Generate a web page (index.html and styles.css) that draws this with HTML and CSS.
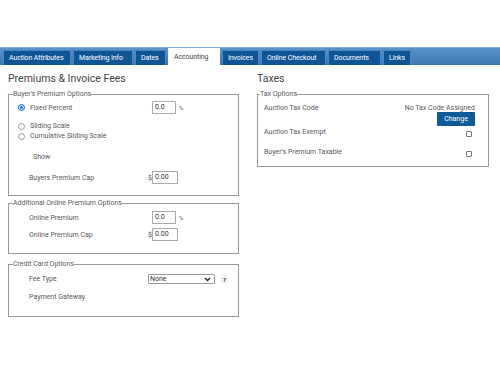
FILE: index.html
```html
<!DOCTYPE html>
<html lang="en">
<head>
    <meta charset="UTF-8">
    <meta name="viewport" content="width=device-width, initial-scale=1.0">
    <title>Accounting</title>
    <link rel="stylesheet" href="styles.css">
</head>
<body>

    <!-- Tab bar -->
    <div class="tabbar">
        <span class="tab">Auction Attributes</span>
        <span class="tab">Marketing Info</span>
        <span class="tab">Dates</span>
        <span class="tab active">Accounting</span>
        <span class="tab">Invoices</span>
        <span class="tab">Online Checkout</span>
        <span class="tab">Documents</span>
        <span class="tab">Links</span>
    </div>

    <div class="columns">
        <!-- Left column -->
        <div class="col">
            <h2>Premiums &amp; Invoice Fees</h2>

            <fieldset class="box box-premium">
                <legend>Buyer's Premium Options</legend>
                <div class="row">
                    <label class="radio"><span class="dot on"></span>Fixed Percent</label>
                    <span class="ctl"><span class="cur"></span><span class="field">0.0</span><span class="unit">%</span></span>
                </div>
                <div class="row tight first-radio">
                    <label class="radio"><span class="dot"></span>Sliding Scale</label>
                </div>
                <div class="row tight">
                    <label class="radio"><span class="dot"></span>Cumulative Sliding Scale</label>
                </div>
                <div class="row show">Show</div>
                <div class="row cap">
                    <span class="lbl">Buyers Premium Cap</span>
                    <span class="ctl"><span class="cur">$</span><span class="field wide">0.00</span></span>
                </div>
            </fieldset>

            <fieldset class="box box-online">
                <legend>Additional Online Premium Options</legend>
                <div class="row">
                    <span class="lbl">Online Premium</span>
                    <span class="ctl"><span class="cur"></span><span class="field">0.0</span><span class="unit">%</span></span>
                </div>
                <div class="row">
                    <span class="lbl">Online Premium Cap</span>
                    <span class="ctl"><span class="cur">$</span><span class="field wide">0.00</span></span>
                </div>
            </fieldset>

            <fieldset class="box box-card">
                <legend>Credit Card Options</legend>
                <div class="row">
                    <span class="lbl">Fee Type</span>
                    <span class="ctl">
                        <span class="select">None
                            <svg width="7" height="5" viewBox="0 0 7 5"><path d="M1 1l2.5 2.5L6 1" fill="none" stroke="#222" stroke-width="1.4"/></svg>
                        </span>
                        <span class="help">?</span>
                    </span>
                </div>
                <div class="row">
                    <span class="lbl">Payment Gateway</span>
                </div>
            </fieldset>
        </div>

        <!-- Right column -->
        <div class="col">
            <h2>Taxes</h2>

            <fieldset class="box box-tax">
                <legend>Tax Options</legend>
                <div class="tax-row code">
                    <span class="tlbl">Auction Tax Code</span>
                    <div class="tax-right">
                        <span>No Tax Code Assigned</span>
                        <button class="btn">Change</button>
                    </div>
                </div>
                <div class="tax-row exempt">
                    <span class="tlbl">Auction Tax Exempt</span>
                    <span class="check"></span>
                </div>
                <div class="tax-row taxable">
                    <span class="tlbl">Buyer's Premium Taxable</span>
                    <span class="check"></span>
                </div>
            </fieldset>
        </div>
    </div>

</body>
</html>
```

FILE: styles.css
```css
body {
    margin: 0;
    padding: 0;
    background-color: #fff;
    font-family: Roboto, "Liberation Sans", sans-serif;
    font-size: 7px;
    color: #5a5a5a;
}

/* Tab bar */
.tabbar {
    margin-top: 47px;
    height: 18px;
    display: flex;
    align-items: flex-end;
    gap: 2px;
    padding-left: 3px;
    background: linear-gradient(#5b93c9, #3d77b3);
    border-top: 1px solid #7aaad8;
    box-sizing: border-box;
}

.tab {
    height: 15px;
    padding: 0 5px;
    background-color: #0e5596;
    border: 1px solid #4c85bd;
    border-bottom: none;
    color: #fff;
    font-size: 7px;
    letter-spacing: -0.1px;
    box-sizing: border-box;
    display: flex;
    align-items: center;
}

.tab:first-child { width: 68px; }
.tab:nth-child(2) { width: 60px; }
.tab:nth-child(3) { width: 31px; }
.tab:nth-child(5) { width: 37px; }
.tab:nth-child(6) { width: 65px; }
.tab:nth-child(7) { width: 53px; }
.tab:nth-child(8) { width: 28px; }

.tab.active {
    width: 52px;
    height: 17px;
    background-color: #fff;
    color: #444;
    border-color: #fff;
}

/* Columns */
.columns {
    display: flex;
    gap: 18px;
    padding: 0 8px;
}

.col {
    display: flex;
    flex-direction: column;
}

.col:first-child { width: 231px; }
.col:last-child { width: 232px; }

h2 {
    margin: 7px 0 5px;
    font-size: 10.5px;
    font-weight: normal;
    color: #444;
    line-height: 13px;
}

.box {
    margin: 0;
    padding: 0 0 0 8px;
    border: 1px solid #9a9a9a;
    box-sizing: border-box;
}

.box legend {
    padding: 0;
    margin-left: -4px;
    font-size: 7px;
    line-height: 9px;
    color: #5a5a5a;
}

.box-premium { height: 106px; padding-top: 2px; }
.box-online { height: 55px; margin-top: 3px; padding-top: 1px; }
.box-card { height: 57px; margin-top: 6px; padding-top: 5px; }

.row {
    display: flex;
    align-items: center;
    height: 13px;
}

.row .lbl {
    width: 131px;
    padding-left: 12px;
    box-sizing: border-box;
}

.radio {
    width: 131px;
    display: flex;
    align-items: center;
    gap: 5px;
    padding-left: 1px;
    box-sizing: border-box;
}

.dot {
    width: 7px;
    height: 7px;
    border-radius: 50%;
    border: 1px solid #999;
    box-sizing: border-box;
    background: #fff;
}

.dot.on {
    border: 1px solid #1a73e8;
    background: #1a73e8;
    box-shadow: inset 0 0 0 1px #fff;
}

.tight { height: 10px; }
.first-radio { margin-top: 7px; }
.show { padding-left: 16px; margin-top: 8px; height: 16px; }
.cap { margin-top: 6px; }

.box-online .row { height: 17px; }
.box-online .row:first-child { margin-top: 1px; }

.box-card .row { height: 10px; }
.box-card .row:first-child { margin-top: 1px; }
.box-card .row + .row { margin-top: 8px; }

.ctl {
    display: flex;
    align-items: center;
}

.cur {
    width: 4px;
    color: #444;
}

.field {
    width: 24px;
    height: 13px;
    border: 1px solid #aaa;
    box-sizing: border-box;
    padding-left: 2px;
    line-height: 11px;
    color: #333;
    background: #fff;
}

.field.wide { width: 26px; }

.unit {
    margin-left: 3px;
    font-size: 6px;
}

.select {
    width: 67px;
    height: 10px;
    border: 1px solid #999;
    border-radius: 1px;
    box-sizing: border-box;
    padding: 0 3px 0 1px;
    display: flex;
    align-items: center;
    justify-content: space-between;
    color: #333;
    line-height: 8px;
}

.help {
    margin-left: 5px;
    width: 9px;
    height: 9px;
    border-radius: 50%;
    background: #f2f2f2;
    font-size: 6px;
    font-weight: bold;
    text-align: center;
    line-height: 9px;
    color: #333;
}

/* Tax options */
.box-tax {
    height: 77px;
    padding: 0 14px 0 6px;
}

.tax-row {
    display: flex;
    justify-content: space-between;
    align-items: center;
    height: 10px;
}

.tax-row.code {
    align-items: flex-start;
    height: auto;
    margin-top: 5px;
}

.tax-row.code .tlbl { line-height: 8px; }
.tax-row.exempt { margin-top: 1px; }
.tax-row.taxable { margin-top: 10px; }

.tax-right {
    display: flex;
    flex-direction: column;
    align-items: flex-end;
    line-height: 8px;
    margin-right: -1px;
}

.btn {
    margin-top: 0;
    width: 38px;
    height: 14px;
    padding: 0;
    border: none;
    border-radius: 1px;
    background-color: #0d5b9a;
    color: #fff;
    font-family: Roboto, "Liberation Sans", sans-serif;
    font-size: 7px;
}

.check {
    width: 6px;
    height: 6px;
    border: 1px solid #777;
    border-radius: 1px;
    box-sizing: border-box;
    margin-right: 2px;
    margin-top: 3px;
}
```
